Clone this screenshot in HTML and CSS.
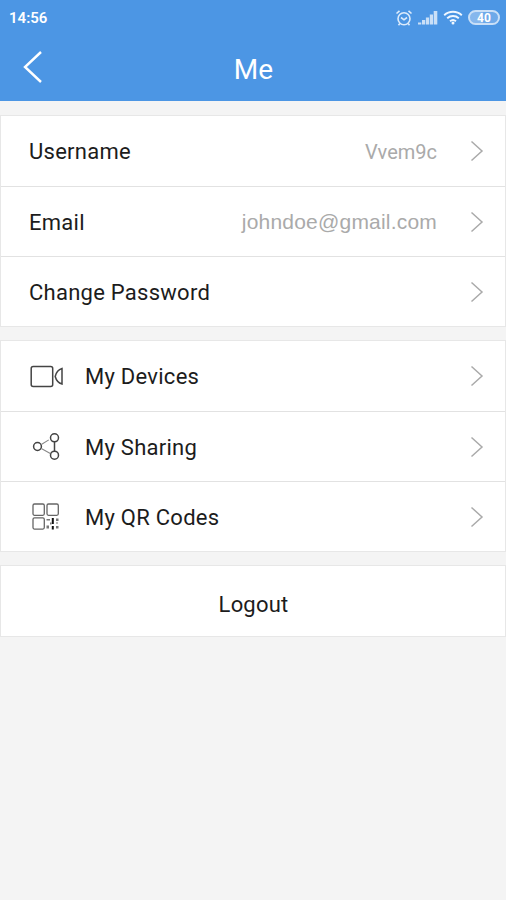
FILE: index.html
```html
<!DOCTYPE html>
<html lang="en">
<head>
  <meta charset="UTF-8">
  <meta name="viewport" content="width=device-width, initial-scale=1.0">
  <title>Me</title>
  <link rel="stylesheet" href="styles.css">
</head>
<body>
  <header class="header">
    <div class="status-bar">
      <span class="time">14:56</span>
      <div class="status-icons">
        <svg class="alarm" width="18" height="18" viewBox="0 0 18 18">
          <circle cx="9" cy="9.8" r="6"/>
          <path d="M1.500 4.500l3-2.700M16.500 4.500l-3-2.700M6 8.500l3 2.300 3-2.300M4.800 14.500l-1.300 1.700M13.200 14.500l1.300 1.700"/>
        </svg>
        <svg class="signal" width="20" height="15" viewBox="0 0 20 15">
          <path d="M0 12.500h3.300v2H0zM4 10h3.200v4.500H4zM7.900 7.500h3.200v7H7.900zM11.800 4.500H15v10h-3.200zM15.700 1h3.600v13.500h-3.600z"/>
        </svg>
        <svg class="wifi" width="20" height="15" viewBox="0 0 20 15">
          <path d="M1.200 5.200c5-4.600 12.600-4.600 17.600 0M4.200 8.300c3.400-3 8.200-3 11.600 0M7 11.200c1.800-1.500 4.200-1.500 6 0"/>
          <circle cx="10" cy="13" r="1.500"/>
        </svg>
        <span class="battery">40</span>
      </div>
    </div>
    <div class="title-bar">
      <a class="back" href="#" aria-label="Back">
        <svg width="20" height="34" viewBox="0 0 20 34"><path d="M18 2L2 17l16 15"/></svg>
      </a>
      <h1>Me</h1>
    </div>
  </header>

  <main>
    <div class="group account">
      <div class="row">
        <span class="label">Username</span>
        <span class="value">Vvem9c</span>
        <svg class="arrow" width="14" height="22" viewBox="0 0 14 22"><path d="M1.500 1.500L12 11 1.500 20.500"/></svg>
      </div>
      <div class="row">
        <span class="label">Email</span>
        <span class="value email">johndoe@gmail.com</span>
        <svg class="arrow" width="14" height="22" viewBox="0 0 14 22"><path d="M1.500 1.500L12 11 1.500 20.500"/></svg>
      </div>
      <div class="row">
        <span class="label">Change Password</span>
        <svg class="arrow" width="14" height="22" viewBox="0 0 14 22"><path d="M1.500 1.500L12 11 1.500 20.500"/></svg>
      </div>
    </div>

    <div class="group">
      <div class="row">
        <svg class="icon" width="36" height="30" viewBox="0 0 36 30">
          <rect x="2.200" y="5.500" width="21.500" height="20" rx="2"/>
          <path d="M33 7.500v15.500c-3.500-1-6-4.500-6.800-7.500 .8-3.500 3.300-7 6.800-8z"/>
        </svg>
        <span class="label">My Devices</span>
        <svg class="arrow" width="14" height="22" viewBox="0 0 14 22"><path d="M1.500 1.500L12 11 1.500 20.500"/></svg>
      </div>
      <div class="row">
        <svg class="icon share" width="36" height="30" viewBox="0 0 36 30">
          <circle cx="8.500" cy="14.500" r="3.900"/>
          <circle cx="25.500" cy="5.800" r="4"/>
          <circle cx="25.500" cy="23.200" r="4"/>
          <path d="M25.500 9.800v9.400"/>
          <path class="thin" d="M12.300 12.500l7.500-4.600M12.300 16.500l9 5"/>
        </svg>
        <span class="label">My Sharing</span>
        <svg class="arrow" width="14" height="22" viewBox="0 0 14 22"><path d="M1.500 1.500L12 11 1.500 20.500"/></svg>
      </div>
      <div class="row">
        <svg class="icon qr" width="36" height="30" viewBox="0 0 36 30">
          <rect x="4" y="2" width="11.300" height="11.300" rx="1.500"/>
          <rect x="18" y="2" width="11.300" height="11.300" rx="1.500"/>
          <rect x="4" y="15.800" width="11.300" height="11.300" rx="1.500"/>
          <path class="dots" d="M17.500 17h3.500v1.500h-3.500zM17.500 23.500h2.500v3h-2.500zM27 16.500h2.500V19H27zM27 24h2.500v2.500H27zM21 20.500h1.500v2H21zM27 20.500h2v1h-2z"/>
          <path class="dots dark" d="M22.800 16h2v6h-2zM22.800 24h2v3.500h-2z"/>
        </svg>
        <span class="label">My QR Codes</span>
        <svg class="arrow" width="14" height="22" viewBox="0 0 14 22"><path d="M1.500 1.500L12 11 1.500 20.500"/></svg>
      </div>
    </div>

    <div class="group logout">Logout</div>
  </main>
</body>
</html>
```

FILE: styles.css
```css
body {
  margin: 0;
  background-color: #f4f4f4;
  color: #1c1c1c;
  font-family: Roboto, Arial, sans-serif;
}
.header {
  height: 101px;
  background-color: #4c96e4;
  color: #fff;
}
.status-bar {
  display: flex;
  align-items: center;
  justify-content: space-between;
  height: 35px;
  padding: 0 6px 0 9px;
}
.time {
  font-size: 15px;
  font-weight: 600;
}
.status-icons {
  display: flex;
  align-items: center;
  gap: 5px;
}
.status-icons svg {
  fill: none;
  stroke: #dcebfb;
  stroke-width: 1.6;
}
.status-icons .signal {
  fill: #c9dff7;
  stroke: none;
}
.status-icons .wifi {
  stroke: #f0f7ff;
  stroke-width: 1.9;
}
.status-icons .wifi circle {
  fill: #f0f7ff;
  stroke: none;
}
.battery {
  box-sizing: border-box;
  width: 32px;
  height: 15px;
  border: 2px solid #c9dff7;
  border-radius: 8px;
  background: linear-gradient(to right, #86b7ed 45%, #6ea9e9 45%);
  font-size: 12px;
  font-weight: bold;
  line-height: 12px;
  text-align: center;
}
.title-bar {
  display: grid;
  grid-template-columns: 60px 1fr 60px;
  align-items: center;
  height: 66px;
}
.back {
  display: flex;
  padding: 0 0 2px 23px;
}
.back path {
  fill: none;
  stroke: #fff;
  stroke-width: 2.4;
}
h1 {
  margin: 0;
  padding: 2px 0 0 1px;
  font-size: 28px;
  font-weight: 400;
  text-align: center;
}
main {
  display: flex;
  flex-direction: column;
  gap: 13px;
  padding-top: 14px;
}
.group {
  border: 1px solid #e7e7e7;
  background-color: #fff;
}
.row {
  display: flex;
  align-items: center;
  height: 70px;
  padding: 0 21px 0 28px;
  box-sizing: border-box;
}
.row + .row {
  border-top: 1px solid #e2e2e2;
}
.label {
  flex: 1;
  padding-top: 1px;
  font-size: 22px;
  letter-spacing: 0.26px;
}
.value {
  margin-right: 33px;
  padding-top: 1px;
  color: #aaa;
  font-size: 20px;
}
.email {
  font-family: "Liberation Sans", Arial, sans-serif;
  font-size: 21px;
  letter-spacing: 0.2px;
}
.arrow path {
  fill: none;
  stroke: #aaa;
  stroke-width: 1.5;
}
.icon {
  margin-right: 20px;
  fill: none;
  stroke: #444;
  stroke-width: 1.5;
}
.icon .thin {
  stroke: #888;
  stroke-width: 1.1;
}
.qr {
  stroke: #666;
  stroke-width: 1.3;
}
.icon .dots {
  fill: #777;
  stroke: none;
}
.icon .dark {
  fill: #111;
}
.logout {
  height: 69px;
  padding: 1px 0 0 1px;
  font-size: 22px;
  letter-spacing: 0.2px;
  line-height: 75px;
  text-align: center;
}
```
